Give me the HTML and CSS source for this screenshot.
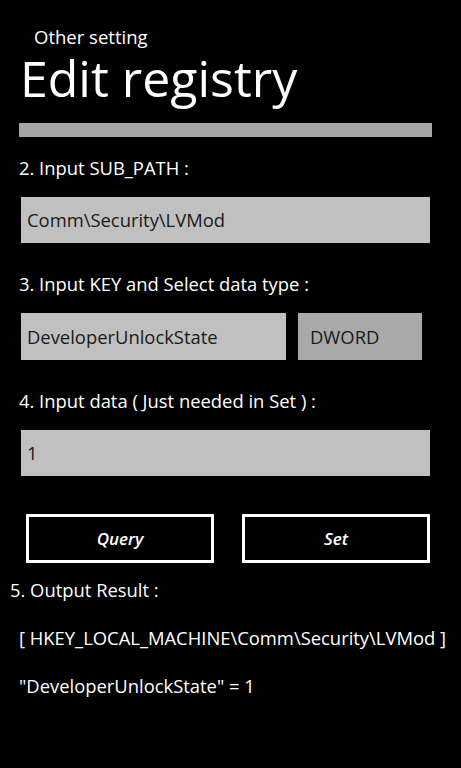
FILE: index.html
```html
<!DOCTYPE html>
<html>
<head>
<meta charset="utf-8">
<link rel="stylesheet" href="styles.css">
</head>
<body>
<div class="page">
  <div class="subtitle">Other setting</div>
  <div class="title">Edit registry</div>
  <div class="bar"></div>

  <div class="label label-first">2. Input SUB_PATH :</div>
  <div class="field field-full">Comm\Security\LVMod</div>

  <div class="label">3. Input KEY and Select data type :</div>
  <div class="row">
    <div class="field field-key">DeveloperUnlockState</div>
    <div class="field field-type">DWORD</div>
  </div>

  <div class="label">4. Input data ( Just needed in Set ) :</div>
  <div class="field field-full">1</div>

  <div class="buttons">
    <div class="btn">Query</div>
    <div class="btn">Set</div>
  </div>

  <div class="label label-out">5. Output Result :</div>
  <div class="result">[ HKEY_LOCAL_MACHINE\Comm\Security\LVMod ]</div>
  <div class="result">"DeveloperUnlockState" = 1</div>
</div>
</body>
</html>
```
FILE: styles.css
```css
html, body {
  margin: 0;
  padding: 0;
  background: #000;
}
body {
  width: 461px;
  height: 768px;
  overflow: hidden;
  color: #fff;
  font-family: "Open Sans", "Noto Sans", sans-serif;
}
.page {
  display: flex;
  flex-direction: column;
  padding-top: 27px;
}
.subtitle {
  margin-left: 34px;
  font-size: 18.5px;
  line-height: 20px;
}
.title {
  margin-left: 20px;
  font-size: 50px;
  line-height: 56px;
  margin-top: 3px;
}
.bar {
  margin: 17px 29px 0 19px;
  height: 14px;
  background: #a6a6a6;
}
.label {
  margin-left: 19px;
  font-size: 18.4px;
  line-height: 24px;
  margin-top: 29px;
}
.label-first {
  margin-top: 19px;
}
.field {
  box-sizing: border-box;
  height: 46px;
  background: #c0c0c0;
  color: #1a1a1a;
  font-size: 18.4px;
  line-height: 46px;
  padding-left: 6px;
}
.field-full {
  margin: 17px 31px 0 21px;
}
.row {
  display: flex;
  margin: 17px 0 0 21px;
  gap: 12px;
}
.row .field {
  height: 47px;
  line-height: 47px;
}
.field-key {
  width: 265px;
}
.field-type {
  width: 124px;
  background: #a9a9a9;
  padding-left: 12px;
}
.buttons {
  display: flex;
  margin: 38px 31px 0 26px;
  justify-content: space-between;
}
.btn {
  box-sizing: border-box;
  width: 188px;
  height: 49px;
  border: 3px solid #fff;
  text-align: center;
  font-size: 17px;
  font-weight: 600;
  font-style: italic;
  line-height: 43px;
}
.label-out {
  margin-left: 10px;
  margin-top: 15px;
}
.result {
  margin-left: 19px;
  font-size: 18.4px;
  line-height: 24px;
  margin-top: 24px;
}
```
